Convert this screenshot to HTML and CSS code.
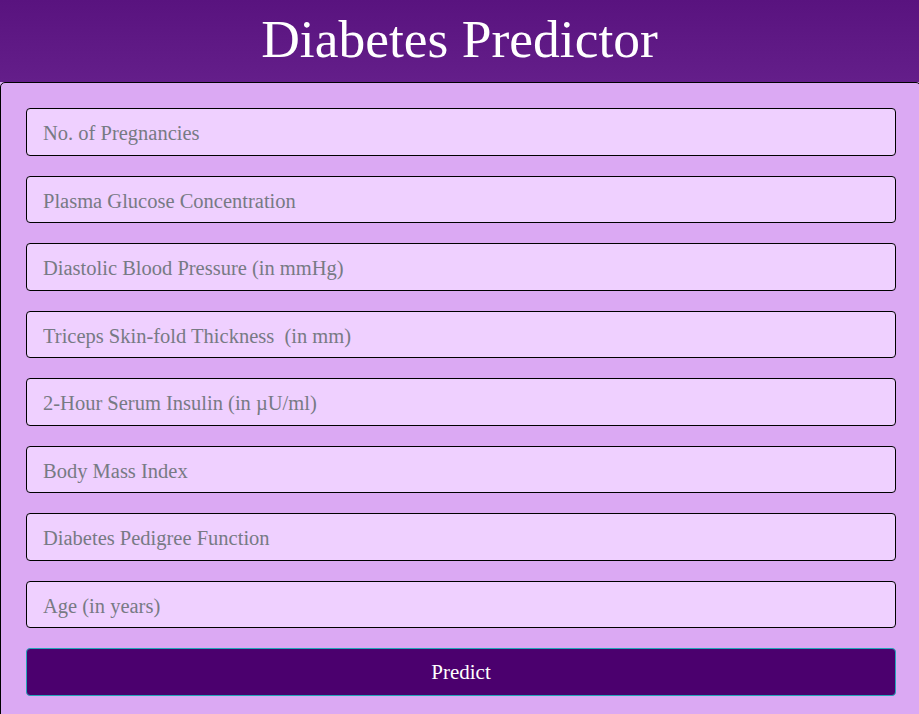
FILE: index.html
```html
<!DOCTYPE html>
<html lang="en">
<head>
<meta charset="utf-8">
<title>Diabetes Predictor</title>
<link rel="stylesheet" href="styles.css">
</head>
<body>
<header class="header">
  <h1 class="title">Diabetes Predictor</h1>
</header>
<main class="panel">
  <form class="form">
    <input class="field" type="text" placeholder="No. of Pregnancies">
    <input class="field" type="text" placeholder="Plasma Glucose Concentration">
    <input class="field" type="text" placeholder="Diastolic Blood Pressure (in mmHg)">
    <input class="field" type="text" placeholder="Triceps Skin-fold Thickness  (in mm)">
    <input class="field" type="text" placeholder="2-Hour Serum Insulin (in µU/ml)">
    <input class="field" type="text" placeholder="Body Mass Index">
    <input class="field" type="text" placeholder="Diabetes Pedigree Function">
    <input class="field" type="text" placeholder="Age (in years)">
    <button class="predict" type="button">Predict</button>
  </form>
</main>
</body>
</html>
```
FILE: styles.css
```css
html, body {
  margin: 0;
  padding: 0;
  overflow: hidden;
  background: #dba9f3;
  font-family: "Liberation Serif", "Times New Roman", serif;
}

.header {
  height: 82px;
  background: linear-gradient(#59137f, #641e8a);
  display: flex;
  align-items: center;
  justify-content: center;
}

.title {
  margin: 0;
  color: #ffffff;
  font-weight: normal;
  font-size: 53.5px;
  line-height: 1;
  padding-bottom: 2px;
}

.panel {
  box-sizing: border-box;
  width: calc(100% + 2px);
  height: 640px;
  background: #dba9f3;
  border: 1px solid #000;
  border-radius: 5px 5px 0 0;
  padding: 25px 25px;
}

.form {
  display: flex;
  flex-direction: column;
  gap: 20px;
  width: 870px;
}

.field {
  box-sizing: border-box;
  width: 100%;
  height: 47.5px;
  margin: 0;
  padding: 4px 16px 0;
  background: #efd0ff;
  border: 1px solid #000;
  border-radius: 4px;
  font-family: "Liberation Serif", "Times New Roman", serif;
  font-size: 20.5px;
  color: #333;
  outline: none;
}

.field::placeholder {
  color: #777a84;
  opacity: 1;
}

.predict {
  box-sizing: border-box;
  width: 100%;
  height: 48px;
  margin: 0;
  background: #4b006e;
  border: 1px solid #23a7b8;
  border-radius: 4px;
  color: #ffffff;
  font-family: "Liberation Serif", "Times New Roman", serif;
  font-size: 21px;
  cursor: pointer;
}
```
